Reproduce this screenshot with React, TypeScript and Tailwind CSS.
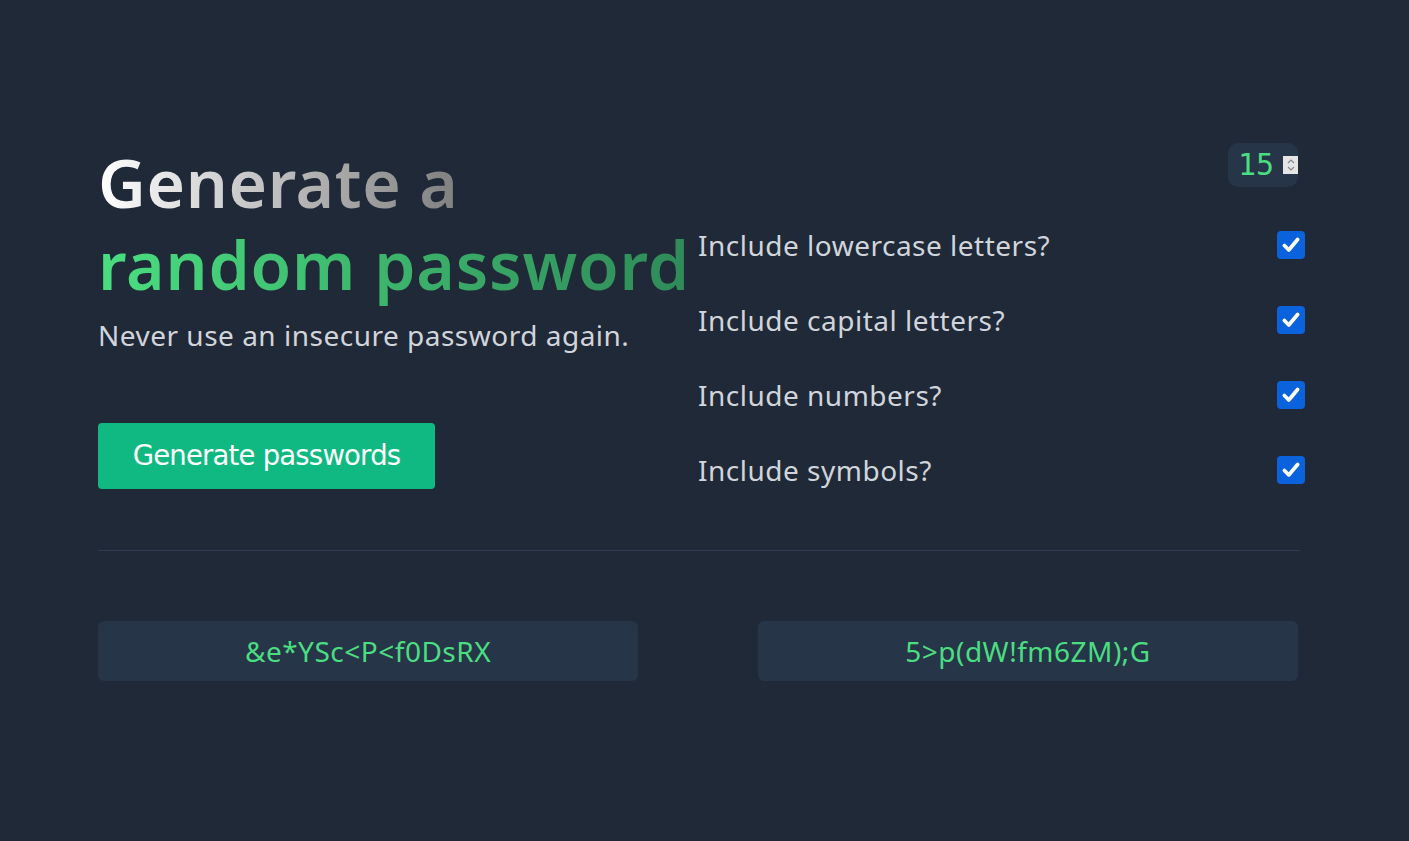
import React from "react";

const font = { fontFamily: '"Noto Sans", "Open Sans", sans-serif' };

function Check({ label }: { label: string }) {
  return (
    <div className="flex items-center justify-between h-[28px]">
      <span className="text-[28px] leading-none text-[#d1d5db] tracking-[0.5px]">{label}</span>
      <div className="w-[28px] h-[28px] rounded-[4px] bg-[#0b62dd] flex items-center justify-center">
        <svg width="22" height="22" viewBox="0 0 20 20">
          <path d="M4 10.5 L8 14.5 L16 5" fill="none" stroke="white" strokeWidth="3.4" strokeLinecap="round" strokeLinejoin="round" />
        </svg>
      </div>
    </div>
  );
}

export default function App() {
  return (
    <div className="w-full min-h-[841px] bg-[#1f2937]" style={font}>
      <div className="w-[1202px] ml-[98px] pt-[143px]">
        <div className="flex">
          <div className="w-[600px] shrink-0 mt-[-2px]">
            <h1 className="text-[66px] font-semibold leading-[82px] tracking-[0.6px] whitespace-nowrap">
              <span className="bg-gradient-to-r from-[#ffffff] to-[#808080] bg-clip-text text-transparent">Generate a</span>
              <br />
              <span className="bg-gradient-to-r from-[#4ade80] to-[#2f8a58] bg-clip-text text-transparent tracking-[0.8px]">random password</span>
            </h1>
            <p className="text-[28px] leading-[42px] text-[#d1d5db] mt-[9px] tracking-[0.5px]">Never use an insecure password again.</p>
            <button
              className="mt-[67px] w-[337px] h-[66px] rounded-[4px] bg-[#10b981] text-white text-[27.5px]"
              style={{ fontFamily: '"DejaVu Sans", Tahoma, sans-serif', letterSpacing: "-0.8px" }}
            >
              Generate passwords
            </button>
          </div>
          <div className="flex-1 flex flex-col">
            <div className="flex justify-end mr-[7px]">
              <div className="w-[70px] h-[44px] rounded-[10px] bg-[#273549] flex items-center pl-[10px] gap-[9px]">
                <span className="text-[30px] text-[#4ade80] leading-none" style={{ fontFamily: '"DejaVu Sans Mono", monospace' }}>15</span>
                <div className="w-[18px] h-[18px] bg-[#e5e5e5] flex flex-col items-center justify-center">
                  <svg width="10" height="14" viewBox="0 0 10 14">
                    <path d="M2 5 L5 2 L8 5 M2 9 L5 12 L8 9" fill="none" stroke="#888" strokeWidth="1.2" />
                  </svg>
                </div>
              </div>
            </div>
            <div className="flex flex-col gap-[47px] mt-[44px] w-[607px]">
              <Check label="Include lowercase letters?" />
              <Check label="Include capital letters?" />
              <Check label="Include numbers?" />
              <Check label="Include symbols?" />
            </div>
          </div>
        </div>
        <div className="h-px bg-[#2f3b4f] mt-[61px]" />
        <div className="flex justify-between mt-[70px] pr-[2px]">
          <div className="w-[540px] h-[60px] rounded-[6px] bg-[#273549] flex items-center justify-center text-[28px] text-[#4ade80] tracking-[0.5px]">
            &amp;e*YSc&lt;P&lt;f0DsRX
          </div>
          <div className="w-[540px] h-[60px] rounded-[6px] bg-[#273549] flex items-center justify-center text-[28px] text-[#4ade80] tracking-[0.5px]">
            5&gt;p(dW!fm6ZM);G
          </div>
        </div>
      </div>
    </div>
  );
}
